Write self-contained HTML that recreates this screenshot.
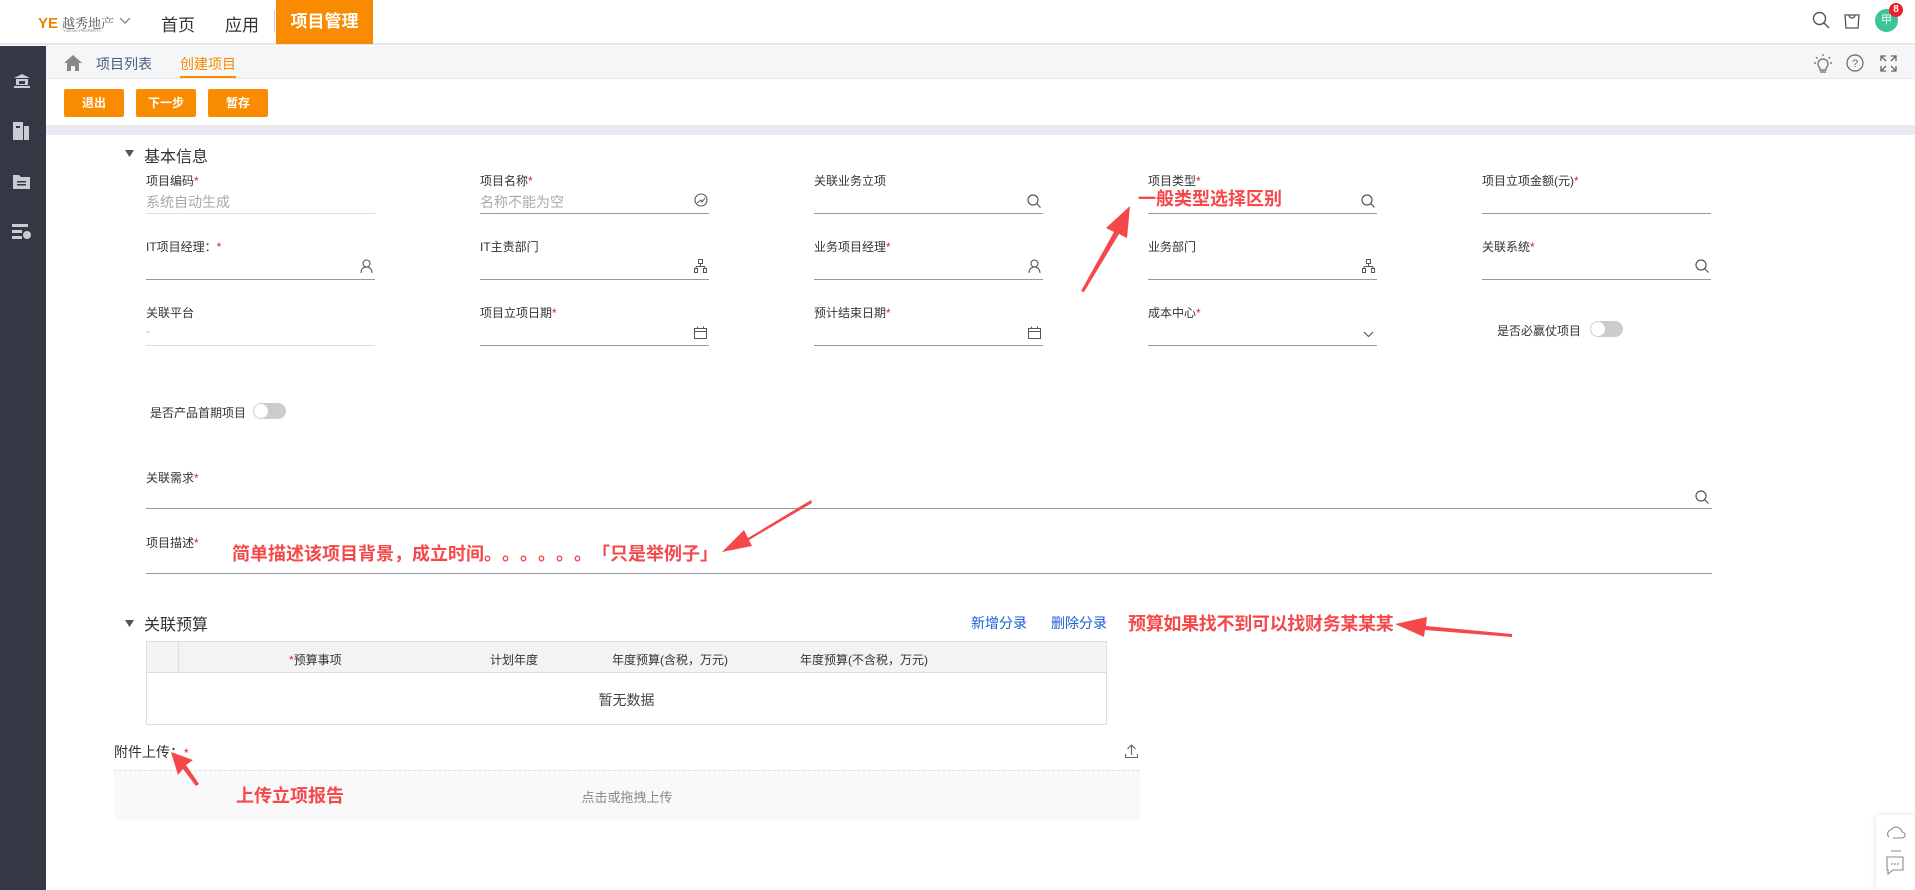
<!DOCTYPE html>
<html><head><meta charset="utf-8"><style>
*{margin:0;padding:0;box-sizing:border-box}
body{width:1915px;height:890px;position:relative;overflow:hidden;background:#fff;font-family:"Liberation Sans","Noto Sans CJK SC",sans-serif;color:#333}
.a{position:absolute}
.lbl{position:absolute;font-size:12px;color:#333;white-space:nowrap}
.lbl i{color:#e02020;font-style:normal}
.ul{position:absolute;height:1px;background:#999;width:229px}
.ul.l{background:#ddd}
.ann{position:absolute;color:#f5484a;font-weight:bold;font-size:18px;white-space:nowrap;font-family:"Noto Sans CJK SC",sans-serif}
.btn{position:absolute;top:89px;height:28px;width:60px;background:#f98b00;color:#fff;font-size:12px;font-weight:bold;text-align:center;line-height:28px;border-radius:2px}
.tog{position:absolute;width:33px;height:16px;border-radius:8px;background:#ccc}
.tog:after{content:"";position:absolute;left:1px;top:1px;width:14px;height:14px;border-radius:7px;background:#fff}
.ic{position:absolute}
</style></head><body>
<!-- header -->
<div class="a" style="left:0;top:0;width:1915px;height:45px;background:#fff;border-bottom:2px solid #e4e6ea"></div>
<div class="a" style="left:38px;top:15px;font-size:15px;font-weight:bold;color:#f07d00">YE</div>
<div class="a" style="left:62px;top:13px;font-size:13px;color:#555;font-family:'Noto Serif CJK SC',serif">越秀地产</div>
<div class="a" style="left:63px;top:28px;font-size:4px;color:#777">YUEXIU PROPERTY</div>
<svg class="ic" style="left:119px;top:17px" width="12" height="8"><path d="M1 1l5 5 5-5" fill="none" stroke="#777" stroke-width="1.2"/></svg>
<div class="a" style="left:161px;top:11px;font-size:17px;color:#333">首页</div>
<div class="a" style="left:225px;top:11px;font-size:17px;color:#333">应用</div>
<div class="a" style="left:274px;top:10px;width:1px;height:22px;background:#ccc"></div>
<div class="a" style="left:276px;top:0;width:97px;height:44px;background:#f98b00;color:#fff;font-size:17px;font-weight:bold;text-align:center;line-height:44px">项目管理</div>
<svg class="ic" style="left:1812px;top:11px" width="18" height="18"><circle cx="7.5" cy="7.5" r="6" fill="none" stroke="#555" stroke-width="1.4"/><path d="M12 12l5 5" stroke="#555" stroke-width="1.4"/></svg>
<svg class="ic" style="left:1843px;top:11px" width="18" height="18"><path d="M2 4h14l-1 13H3z M6 4a3 3 0 0 0 6 0" fill="none" stroke="#555" stroke-width="1.3"/></svg>
<div class="a" style="left:1875px;top:9px;width:23px;height:23px;border-radius:50%;background:#3fc496;color:#fff;font-size:11px;text-align:center;line-height:23px">甲</div>
<div class="a" style="left:1889px;top:3px;width:14px;height:14px;border-radius:50%;background:#e8232e;color:#fff;font-size:10px;font-weight:bold;text-align:center;line-height:14px">8</div>
<!-- sidebar -->
<div class="a" style="left:0;top:46px;width:46px;height:844px;background:#343845"></div>
<svg class="ic" style="left:13px;top:73px" width="18" height="15"><path d="M1 5L9 1l8 4z M3 6h12v6H3z M1 13h16v2H1z" fill="#c8ccd5"/><rect x="6" y="8" width="6" height="3" fill="#343845"/></svg>
<svg class="ic" style="left:13px;top:122px" width="16" height="18"><rect x="0" y="0" width="10" height="18" fill="#c8ccd5"/><rect x="11" y="4" width="5" height="14" fill="#c8ccd5"/><rect x="3" y="4" width="4" height="2" fill="#343845"/></svg>
<svg class="ic" style="left:13px;top:174px" width="17" height="15"><path d="M0 1h6l2 2h9v12H0z" fill="#c8ccd5"/><rect x="4" y="7" width="9" height="1.5" fill="#343845"/><rect x="4" y="10" width="9" height="1.5" fill="#343845"/></svg>
<svg class="ic" style="left:12px;top:224px" width="19" height="16"><rect x="0" y="0" width="16" height="3" fill="#c8ccd5"/><rect x="0" y="6" width="10" height="3" fill="#c8ccd5"/><rect x="0" y="12" width="10" height="3" fill="#c8ccd5"/><circle cx="15" cy="11" r="4" fill="#c8ccd5"/></svg>
<!-- breadcrumb -->
<div class="a" style="left:46px;top:46px;width:1869px;height:33px;background:#f5f6f8;border-bottom:1px solid #e4e6ea"></div>
<svg class="ic" style="left:64px;top:55px" width="18" height="16"><path d="M9 0L0 8h3v8h4v-5h4v5h4V8h3z" fill="#888"/></svg>
<div class="a" style="left:96px;top:54px;font-size:14px;color:#4a5a80">项目列表</div>
<div class="a" style="left:180px;top:54px;font-size:14px;color:#f98b00">创建项目</div>
<div class="a" style="left:180px;top:76px;width:56px;height:2px;background:#f98b00"></div>
<svg class="ic" style="left:1814px;top:54px" width="18" height="20"><path d="M9 5a5 5 0 0 0-3 9v2h6v-2a5 5 0 0 0-3-9z M6 18h6" fill="none" stroke="#666" stroke-width="1.2"/><path d="M9 0v2M2 3l1.5 1.5M16 3l-1.5 1.5M0 9h2M16 9h2" stroke="#666" stroke-width="1.2"/></svg>
<svg class="ic" style="left:1846px;top:54px" width="18" height="18"><circle cx="9" cy="9" r="8" fill="none" stroke="#666" stroke-width="1.2"/><text x="9" y="13" font-size="11" text-anchor="middle" fill="#666" font-family="Liberation Sans">?</text></svg>
<svg class="ic" style="left:1880px;top:55px" width="17" height="17"><path d="M1 6V1h5M11 1h5v5M16 11v5h-5M6 16H1v-5M1 1l5 5M16 1l-5 5M16 16l-5-5M1 16l5-5" fill="none" stroke="#666" stroke-width="1.3"/></svg>
<!-- buttons -->
<div class="btn" style="left:64px">退出</div>
<div class="btn" style="left:136px">下一步</div>
<div class="btn" style="left:208px">暂存</div>
<div class="a" style="left:46px;top:125px;width:1869px;height:10px;background:#e8ebef"></div>
<!-- basic info -->
<svg class="ic" style="left:125px;top:150px" width="9" height="7"><path d="M0 0h9L4.5 7z" fill="#555"/></svg>
<div class="a" style="left:144px;top:143px;font-size:16px;color:#333">基本信息</div>

<div class="lbl" style="left:146px;top:172px">项目编码<i>*</i></div>
<div class="a" style="left:146px;top:192px;font-size:14px;color:#aaa">系统自动生成</div>
<div class="ul l" style="left:146px;top:213px"></div>
<div class="lbl" style="left:480px;top:172px">项目名称<i>*</i></div>
<div class="a" style="left:480px;top:192px;font-size:14px;color:#aaa">名称不能为空</div>
<svg class="ic" style="left:694px;top:193px" width="14" height="14"><circle cx="7" cy="7" r="6" fill="none" stroke="#555" stroke-width="1.1"/><path d="M3 10l4-3 1 2 3-4" fill="none" stroke="#555" stroke-width="1"/></svg>
<div class="ul" style="left:480px;top:213px"></div>
<div class="lbl" style="left:814px;top:172px">关联业务立项</div>
<svg class="ic" style="left:1027px;top:194px" width="14" height="14"><circle cx="6" cy="6" r="5" fill="none" stroke="#555" stroke-width="1.2"/><path d="M9.5 9.5l4 4" stroke="#555" stroke-width="1.2"/></svg>
<div class="ul" style="left:814px;top:213px;width:229px"></div>
<div class="lbl" style="left:1148px;top:172px">项目类型<i>*</i></div>
<svg class="ic" style="left:1361px;top:194px" width="14" height="14"><circle cx="6" cy="6" r="5" fill="none" stroke="#555" stroke-width="1.2"/><path d="M9.5 9.5l4 4" stroke="#555" stroke-width="1.2"/></svg>
<div class="ul" style="left:1148px;top:213px"></div>
<div class="lbl" style="left:1482px;top:172px">项目立项金额(元)<i>*</i></div>
<div class="ul" style="left:1482px;top:213px"></div>

<div class="lbl" style="left:146px;top:238px">IT项目经理：<i>*</i></div>
<svg class="ic" style="left:360px;top:259px" width="13" height="15"><circle cx="6.5" cy="4.5" r="3.5" fill="none" stroke="#555" stroke-width="1.1"/><path d="M1 14c0-4 2.5-6 5.5-6s5.5 2 5.5 6" fill="none" stroke="#555" stroke-width="1.1"/></svg>
<div class="ul" style="left:146px;top:279px"></div>
<div class="lbl" style="left:480px;top:238px">IT主责部门</div>
<svg class="ic" style="left:694px;top:259px" width="13" height="14"><path d="M4.5 0.5h4v4h-4z M6.5 4.5v3 M2 7.5h9 M2 7.5v2 M11 7.5v2 M0.5 9.5h3v4h-3z M9.5 9.5h3v4h-3z" fill="none" stroke="#555" stroke-width="1"/></svg>
<div class="ul" style="left:480px;top:279px"></div>
<div class="lbl" style="left:814px;top:238px">业务项目经理<i>*</i></div>
<svg class="ic" style="left:1028px;top:259px" width="13" height="15"><circle cx="6.5" cy="4.5" r="3.5" fill="none" stroke="#555" stroke-width="1.1"/><path d="M1 14c0-4 2.5-6 5.5-6s5.5 2 5.5 6" fill="none" stroke="#555" stroke-width="1.1"/></svg>
<div class="ul" style="left:814px;top:279px"></div>
<div class="lbl" style="left:1148px;top:238px">业务部门</div>
<svg class="ic" style="left:1362px;top:259px" width="13" height="14"><path d="M4.5 0.5h4v4h-4z M6.5 4.5v3 M2 7.5h9 M2 7.5v2 M11 7.5v2 M0.5 9.5h3v4h-3z M9.5 9.5h3v4h-3z" fill="none" stroke="#555" stroke-width="1"/></svg>
<div class="ul" style="left:1148px;top:279px"></div>
<div class="lbl" style="left:1482px;top:238px">关联系统<i>*</i></div>
<svg class="ic" style="left:1695px;top:259px" width="14" height="14"><circle cx="6" cy="6" r="5" fill="none" stroke="#555" stroke-width="1.2"/><path d="M9.5 9.5l4 4" stroke="#555" stroke-width="1.2"/></svg>
<div class="ul" style="left:1482px;top:279px"></div>

<div class="lbl" style="left:146px;top:304px">关联平台</div>
<div class="a" style="left:146px;top:324px;font-size:12px;color:#aaa">-</div>
<div class="ul l" style="left:146px;top:345px"></div>
<div class="lbl" style="left:480px;top:304px">项目立项日期<i>*</i></div>
<svg class="ic" style="left:694px;top:326px" width="13" height="13"><path d="M0.5 2.5h12v10H0.5z M0.5 5.5h12 M3.5 0.5v2 M9.5 0.5v2" fill="none" stroke="#555" stroke-width="1"/></svg>
<div class="ul" style="left:480px;top:345px"></div>
<div class="lbl" style="left:814px;top:304px">预计结束日期<i>*</i></div>
<svg class="ic" style="left:1028px;top:326px" width="13" height="13"><path d="M0.5 2.5h12v10H0.5z M0.5 5.5h12 M3.5 0.5v2 M9.5 0.5v2" fill="none" stroke="#555" stroke-width="1"/></svg>
<div class="ul" style="left:814px;top:345px"></div>
<div class="lbl" style="left:1148px;top:304px">成本中心<i>*</i></div>
<svg class="ic" style="left:1363px;top:331px" width="11" height="7"><path d="M1 1l4.5 4.5L10 1" fill="none" stroke="#555" stroke-width="1.1"/></svg>
<div class="ul" style="left:1148px;top:345px"></div>
<div class="lbl" style="left:1497px;top:322px">是否必赢仗项目</div>
<div class="tog" style="left:1590px;top:321px"></div>

<div class="lbl" style="left:150px;top:404px">是否产品首期项目</div>
<div class="tog" style="left:253px;top:403px"></div>

<div class="lbl" style="left:146px;top:469px">关联需求<i>*</i></div>
<svg class="ic" style="left:1695px;top:490px" width="14" height="14"><circle cx="6" cy="6" r="5" fill="none" stroke="#555" stroke-width="1.2"/><path d="M9.5 9.5l4 4" stroke="#555" stroke-width="1.2"/></svg>
<div class="ul" style="left:146px;top:508px;width:1566px"></div>
<div class="lbl" style="left:146px;top:534px">项目描述<i>*</i></div>
<div class="ul" style="left:146px;top:573px;width:1566px"></div>

<!-- budget -->
<svg class="ic" style="left:125px;top:620px" width="9" height="7"><path d="M0 0h9L4.5 7z" fill="#555"/></svg>
<div class="a" style="left:144px;top:611px;font-size:16px;color:#333">关联预算</div>
<div class="a" style="left:971px;top:613px;font-size:14px;color:#1a5fd4">新增分录</div>
<div class="a" style="left:1051px;top:613px;font-size:14px;color:#1a5fd4">删除分录</div>
<div class="a" style="left:146px;top:641px;width:961px;height:84px;border:1px solid #ddd"></div>
<div class="a" style="left:147px;top:642px;width:959px;height:31px;background:#f3f3f3;border-bottom:1px solid #ddd"></div>
<div class="a" style="left:178px;top:642px;width:1px;height:31px;background:#ddd"></div>
<div class="lbl" style="left:289px;top:651px"><i>*</i>预算事项</div>
<div class="lbl" style="left:490px;top:651px">计划年度</div>
<div class="lbl" style="left:612px;top:651px">年度预算(含税，万元)</div>
<div class="lbl" style="left:800px;top:651px">年度预算(不含税，万元)</div>
<div class="a" style="left:146px;top:690px;width:961px;text-align:center;font-size:14px;color:#444">暂无数据</div>

<!-- upload -->
<div class="a" style="left:114px;top:742px;font-size:14px;color:#333">附件上传：<span style="color:#e02020;font-size:12px">*</span></div>
<svg class="ic" style="left:1125px;top:744px" width="13" height="14"><path d="M6.5 11V1 M2.5 5l4-4 4 4 M0.5 10v3.5h12V10" fill="none" stroke="#666" stroke-width="1.1"/></svg>
<div class="a" style="left:114px;top:770px;width:1026px;height:50px;background:#f9f9f9;border-top:1px dashed #ddd"></div>
<div class="a" style="left:114px;top:787px;width:1026px;text-align:center;font-size:13px;color:#888">点击或拖拽上传</div>

<!-- floating widget -->
<div class="a" style="left:1876px;top:815px;width:39px;height:75px;background:#fff;box-shadow:0 0 6px rgba(0,0,0,.15);border-radius:3px 0 0 3px"></div>
<svg class="ic" style="left:1886px;top:824px" width="20" height="56"><path d="M3 13a4 4 0 0 1 2-7a6 6 0 0 1 11 2a3 3 0 0 1 0 6H7" fill="none" stroke="#888" stroke-width="1.1"/><path d="M5 27h10" stroke="#888"/><path d="M1 33h16v13H7l-5 4v-4H1z" fill="none" stroke="#888" stroke-width="1.1"/><circle cx="6" cy="40" r="0.9" fill="#888"/><circle cx="9" cy="40" r="0.9" fill="#888"/><circle cx="12" cy="40" r="0.9" fill="#888"/></svg>

<!-- annotations -->
<div class="ann" style="left:1138px;top:185px">一般类型选择区别</div>
<div class="ann" style="left:232px;top:540px">简单描述该项目背景，成立时间<span style="letter-spacing:9px">。。。。。。</span>「只是举例子」</div>
<div class="ann" style="left:1128px;top:610px;letter-spacing:-0.3px">预算如果找不到可以找财务某某某</div>
<div class="ann" style="left:236px;top:782px">上传立项报告</div>
<svg class="ic" style="left:0;top:0" width="1915" height="890">
<g fill="#f5484a">
<path d="M1081 291 L1114 232 L1106 228 L1130 206 L1127 238 L1119 234 L1084 292z"/>
<path d="M811 500 L748 538 L744 530 L722 552 L752 546 L749 540 L812 503z"/>
<path d="M1512 634 L1426 626 L1427 617 L1395 624 L1424 637 L1425 630 L1512 637z"/>
<path d="M199 784 L186 765 L193 760 L171 752 L178 775 L183 769 L196 786z"/>
</g></svg>
</body></html>
